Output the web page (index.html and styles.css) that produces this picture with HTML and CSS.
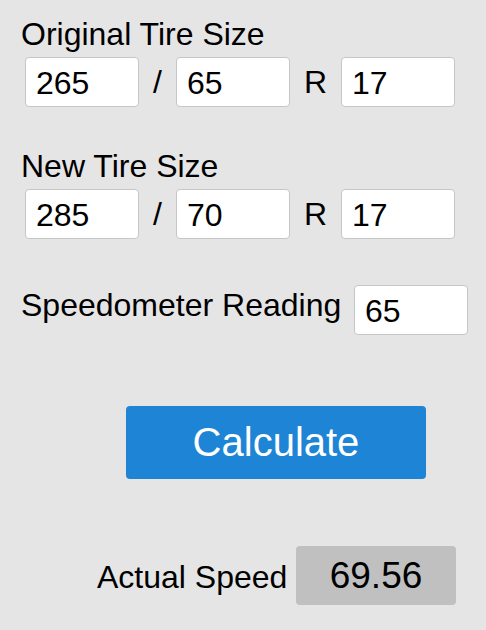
FILE: index.html
```html
<!DOCTYPE html>
<html lang="en">
<head>
    <meta charset="UTF-8">
    <meta name="viewport" content="width=device-width, initial-scale=1.0">
    <title>Tire Size Speedometer Calculator</title>
    <link rel="stylesheet" href="styles.css">
</head>
<body>
    <div class="calculator">
        <div class="tire-group">
            <div class="group-label">Original Tire Size</div>
            <div class="tire-row">
                <input class="field" type="text" id="origWidth" value="265">
                <span class="sep sep-slash">/</span>
                <input class="field" type="text" id="origRatio" value="65">
                <span class="sep sep-r">R</span>
                <input class="field" type="text" id="origRim" value="17">
            </div>
        </div>

        <div class="tire-group second">
            <div class="group-label">New Tire Size</div>
            <div class="tire-row">
                <input class="field" type="text" id="newWidth" value="285">
                <span class="sep sep-slash">/</span>
                <input class="field" type="text" id="newRatio" value="70">
                <span class="sep sep-r">R</span>
                <input class="field" type="text" id="newRim" value="17">
            </div>
        </div>

        <div class="speedo-row">
            <span class="group-label">Speedometer Reading</span>
            <input class="field" type="text" id="speedo" value="65">
        </div>

        <button class="calc-btn" onclick="calculate()">Calculate</button>

        <div class="result-row">
            <span class="group-label">Actual Speed</span>
            <div class="result" id="result">69.56</div>
        </div>
    </div>

    <script>
        function diameter(w, r, rim) {
            return (w * r / 100) * 2 / 25.4 + rim;
        }

        function calculate() {
            const v = id => parseFloat(document.getElementById(id).value);
            const oldD = diameter(v('origWidth'), v('origRatio'), v('origRim'));
            const newD = diameter(v('newWidth'), v('newRatio'), v('newRim'));
            const speed = v('speedo') * newD / oldD;
            document.getElementById('result').textContent = speed.toFixed(2);
        }
    </script>
</body>
</html>
```

FILE: styles.css
```css
* {
    margin: 0;
    padding: 0;
    box-sizing: border-box;
}

body {
    font-family: 'Liberation Sans', Arial, Helvetica, sans-serif;
    background: #e5e5e5;
    color: #000;
}

.calculator {
    padding: 16px 0 0 21px;
}

.group-label {
    font-size: 32px;
    line-height: 36px;
    white-space: nowrap;
}

.tire-group .group-label {
    margin-bottom: 5px;
}

.tire-group.second {
    margin-top: 41px;
}

.tire-row {
    display: flex;
    align-items: center;
    padding-left: 4px;
}

.field {
    width: 114px;
    height: 50px;
    background: #fff;
    border: 1px solid #c6c6c6;
    border-radius: 4px;
    padding: 2px 10px 0;
    font-family: inherit;
    font-size: 32px;
    color: #000;
    outline: none;
}

.sep {
    font-size: 32px;
    text-align: center;
}

.sep-slash {
    width: 37px;
}

.sep-r {
    width: 51px;
}

.speedo-row {
    display: flex;
    justify-content: space-between;
    align-items: flex-start;
    width: 447px;
    margin-top: 46px;
}

.speedo-row .group-label {
    padding-top: 2px;
}

.calc-btn {
    display: block;
    width: 300px;
    height: 73px;
    margin: 71px 0 0 105px;
    background: #1e84d6;
    color: #fff;
    border: none;
    border-radius: 4px;
    font-family: inherit;
    font-size: 40px;
    cursor: pointer;
}

.calc-btn:hover {
    background: #1a76c0;
}

.result-row {
    display: flex;
    justify-content: space-between;
    align-items: center;
    width: 359px;
    margin: 67px 0 0 76px;
}

.result-row .group-label {
    padding-top: 2px;
}

.result {
    width: 160px;
    height: 59px;
    background: #c0c0c0;
    border-radius: 4px;
    font-size: 37px;
    line-height: 59px;
    text-align: center;
}
```
